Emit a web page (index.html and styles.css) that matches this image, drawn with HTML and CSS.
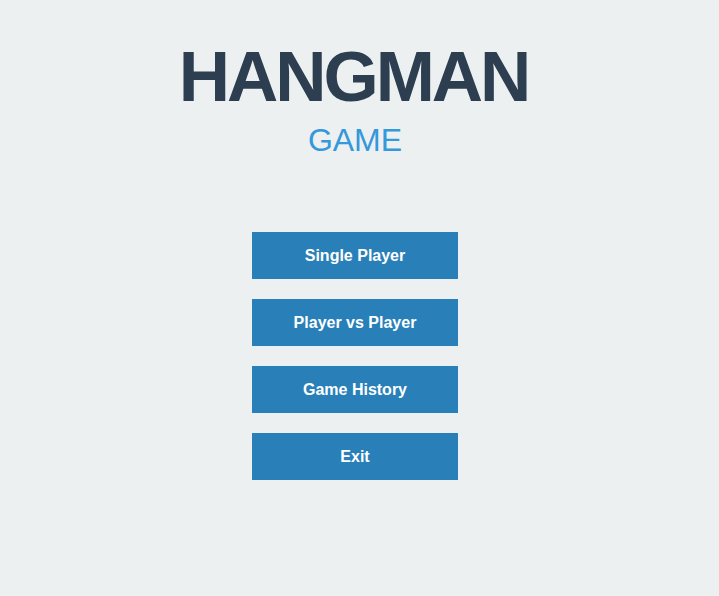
FILE: index.html
```html
<!DOCTYPE html>
<html>
<head>
<meta charset="utf-8">
<link rel="stylesheet" href="styles.css">
</head>
<body>
<div class="page">
  <h1 class="title">HANGMAN</h1>
  <h2 class="subtitle">GAME</h2>
  <div class="menu">
    <button class="btn">Single Player</button>
    <button class="btn">Player vs Player</button>
    <button class="btn">Game History</button>
    <button class="btn">Exit</button>
  </div>
</div>
</body>
</html>
```
FILE: styles.css
```css
html, body {
  margin: 0;
  padding: 0;
  background: #ecf0f1;
  font-family: "Liberation Sans", Arial, sans-serif;
}
.page {
  width: 710px;
  padding-top: 41px;
  display: flex;
  flex-direction: column;
  align-items: center;
}
.title {
  margin: 0;
  font-size: 71px;
  line-height: 72px;
  font-weight: bold;
  color: #2c3e50;
  letter-spacing: -3px;
  text-indent: -3px;
}
.subtitle {
  margin: 11px 0 0;
  font-size: 32px;
  line-height: 1;
  font-weight: normal;
  color: #3498db;
}
.menu {
  margin-top: 76px;
  display: flex;
  flex-direction: column;
  gap: 20px;
}
.btn {
  width: 206px;
  height: 47px;
  border: none;
  background: #2980b9;
  color: #fff;
  font-family: "Liberation Sans", Arial, sans-serif;
  font-size: 16px;
  font-weight: bold;
  padding: 0;
}
```
